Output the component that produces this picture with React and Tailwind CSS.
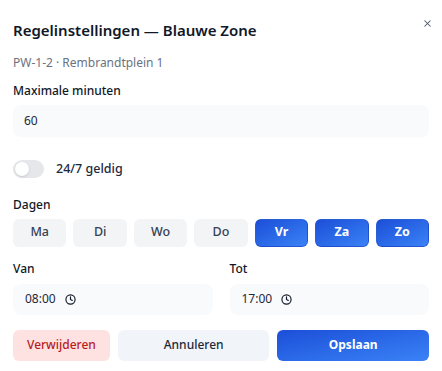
import React, { useState } from 'react'
import { X, Clock } from 'lucide-react'

const DAYS = ['Ma', 'Di', 'Wo', 'Do', 'Vr', 'Za', 'Zo']

export default function App() {
  const [active, setActive] = useState(['Vr', 'Za', 'Zo'])
  const [always, setAlways] = useState(false)

  const toggleDay = (d) =>
    setActive((a) => (a.includes(d) ? a.filter((x) => x !== d) : [...a, d]))

  return (
    <div className="w-[442px] h-[371px] bg-white px-[13px] pt-[20px] text-gray-900 font-['Noto_Sans',sans-serif] relative">
      <button className="absolute right-[5px] top-[14px] text-gray-600 p-1">
        <X className="w-[11px] h-[11px]" strokeWidth={2.2} />
      </button>

      <h2 className="text-[15px] leading-[20px] font-semibold">Regelinstellingen — Blauwe Zone</h2>
      <p className="mt-[14px] text-[12px] leading-[17px] text-gray-500">PW-1-2 · Rembrandtplein 1</p>

      <label className="block mt-[11px] text-[12px] leading-[17px] font-medium">Maximale minuten</label>
      <div className="mt-[6px] h-[32px] rounded-lg bg-[#f9fafb] px-[11px] flex items-center text-[12px] text-gray-800">
        60
      </div>

      <div className="mt-[23px] flex items-center gap-3">
        <button
          onClick={() => setAlways(!always)}
          className={`w-[31px] h-[18px] rounded-full p-[2px] flex ${always ? 'bg-blue-600 justify-end' : 'bg-gray-200 justify-start'}`}
        >
          <span className="w-[14px] h-[14px] rounded-full bg-white shadow-sm" />
        </button>
        <span className="text-[12.5px] font-medium text-gray-800">24/7 geldig</span>
      </div>

      <div className="mt-[17px] text-[12px] leading-[17px] font-medium">Dagen</div>
      <div className="mt-[6px] grid grid-cols-7 gap-[7px]">
        {DAYS.map((d) => {
          const on = active.includes(d)
          return (
            <button
              key={d}
              onClick={() => toggleDay(d)}
              className={`h-[28px] rounded-md text-[12.5px] ${
                on
                  ? 'bg-gradient-to-br from-[#1d4ed8] to-[#3b82f6] text-white font-bold border border-[#1e40af]/40'
                  : 'bg-[#f3f4f6] text-gray-700 font-medium'
              }`}
            >
              {d}
            </button>
          )
        })}
      </div>

      <div className="mt-[13px] grid grid-cols-2 gap-[17px]">
        {[
          ['Van', '08:00'],
          ['Tot', '17:00'],
        ].map(([label, time]) => (
          <div key={label}>
            <div className="text-[12px] leading-[17px] font-medium">{label}</div>
            <div className="mt-[7px] h-[31px] rounded-lg bg-[#f9fafb] px-[12px] flex items-center gap-[9px] text-[12px] text-gray-800">
              <span>{time}</span>
              <Clock className="w-[11px] h-[11px] text-gray-900" strokeWidth={2.5} />
            </div>
          </div>
        ))}
      </div>

      <div className="mt-[15px] flex gap-[8px]">
        <button className="h-[31px] px-[14px] rounded-md bg-[#fee2e2] text-[#b91c1c] text-[12px] font-medium">
          Verwijderen
        </button>
        <button className="h-[31px] flex-1 rounded-md bg-[#f1f5f9] text-gray-800 text-[12px] font-medium">
          Annuleren
        </button>
        <button className="h-[31px] flex-1 rounded-md bg-gradient-to-br from-[#1d4ed8] to-[#3b82f6] text-white text-[12px] font-bold">
          Opslaan
        </button>
      </div>
    </div>
  )
}
